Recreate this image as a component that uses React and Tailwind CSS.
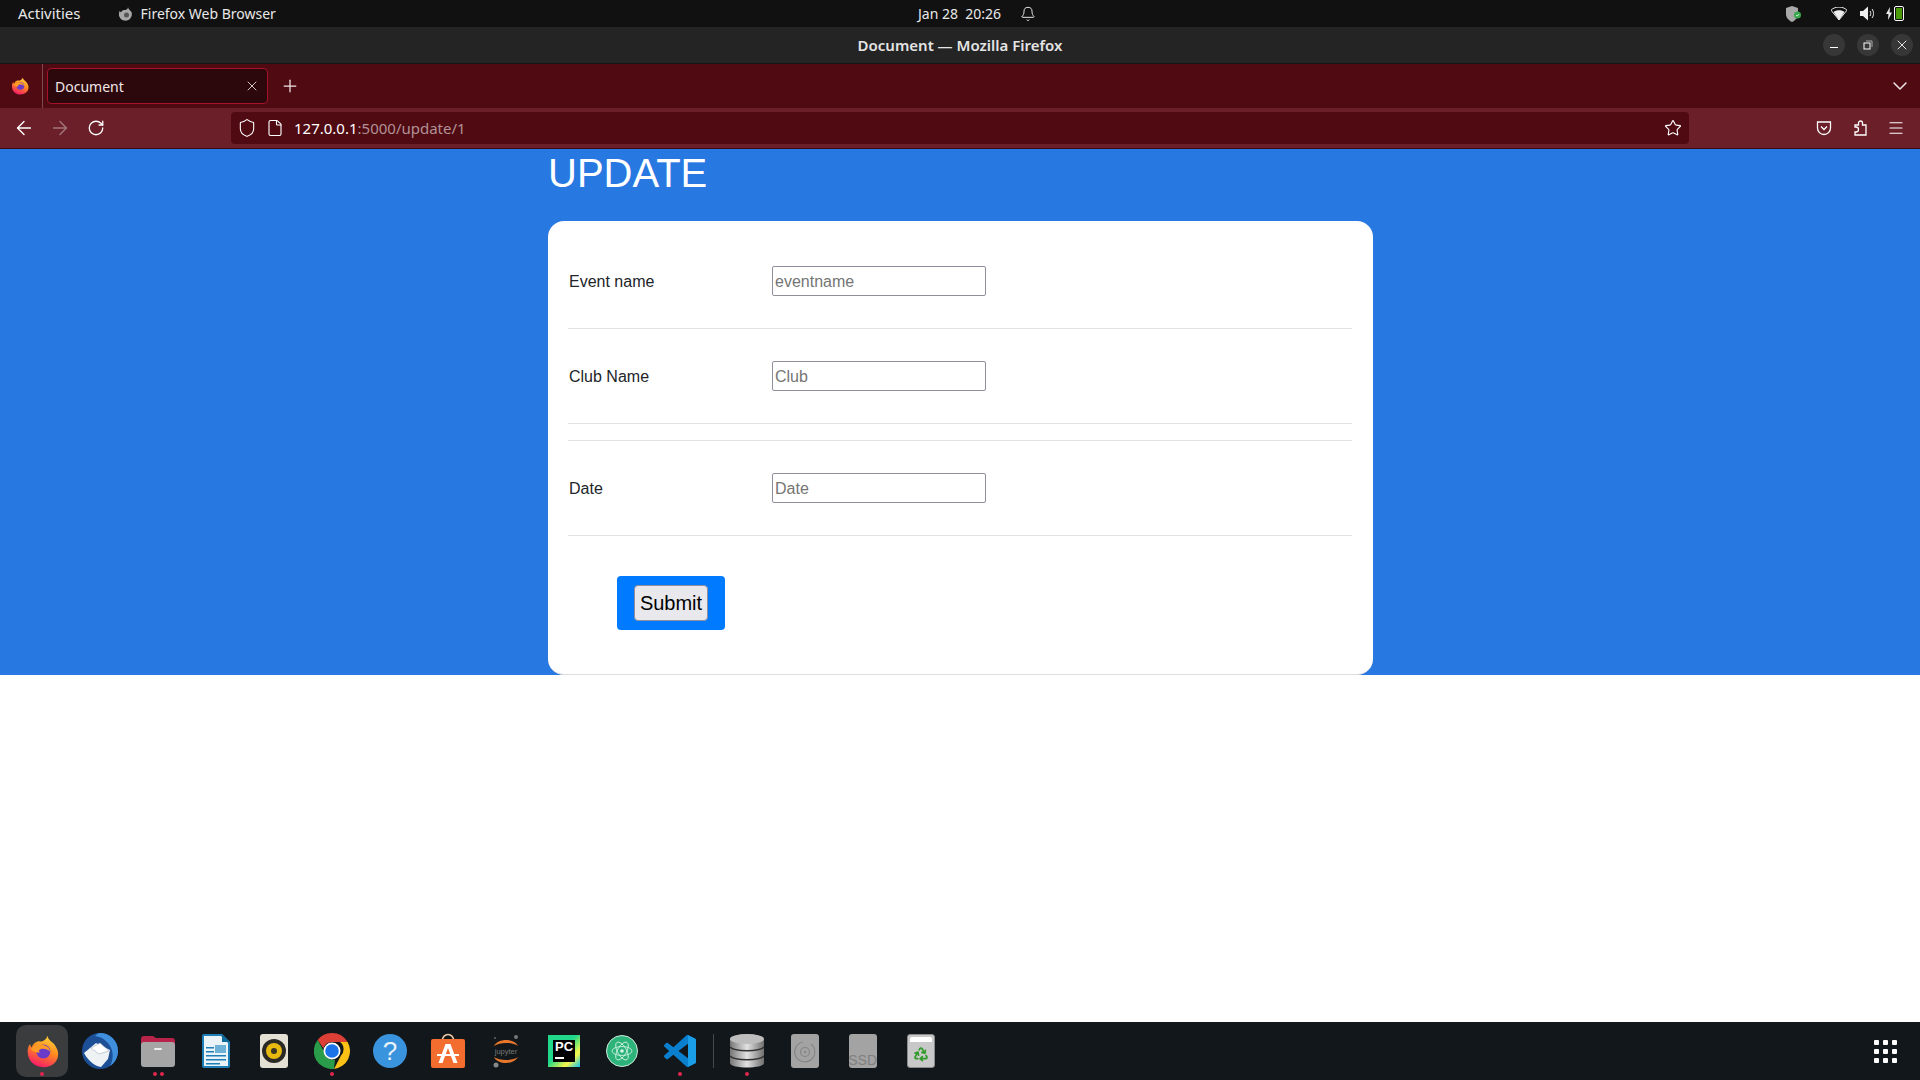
import { ArrowLeft, ArrowRight, RotateCw, Shield, File, Star, Plus, X, ChevronDown, Menu, Bell, Recycle } from "lucide-react";

const uiFont = "font-['Noto_Sans',sans-serif]";

function FirefoxLogo({ size = 20, id = "ff" }) {
  return (
    <svg width={size} height={size} viewBox="0 0 40 40">
      <defs>
        <linearGradient id={id} x1="0.7" y1="0" x2="0.3" y2="1">
          <stop offset="0" stopColor="#ffd43a" />
          <stop offset="0.45" stopColor="#ff8a1f" />
          <stop offset="1" stopColor="#f5156c" />
        </linearGradient>
      </defs>
      <path d="M26 1c1 5 5 7 8 10 3 4 5 8 5 12 0 10-8 16-18 16C10 39 2 31 2 20c0-3 1-7 3-9 0 2 1 3 2 4 1-3 3-6 7-7 2-1 3 0 5 0 3-1 6-3 7-7z" fill={`url(#${id})`} />
      <circle cx="21" cy="20" r="8.5" fill="#6a3bc8" />
      <path d="M6 17c4-5 10-6 15-5 5 1 8 4 8 8-3-3-7-4-11-3-3 1-3 3-1 4-5 1-9-1-11-4z" fill="#ff9a26" />
    </svg>
  );
}

function ThunderbirdIcon() {
  return (
    <svg width="36" height="36" viewBox="0 0 36 36">
      <circle cx="18" cy="18" r="18" fill="#1c4f96" />
      <path d="M18 0a18 18 0 0 1 18 18c0 6-3 12-8 15 4-7 4-17-3-24-3-3-6-5-12-6 2-2 3-3 5-3z" fill="#3f8fdc" />
      <path d="M2 20l12-10 14 7-2 9-7 8c-6-1-12-5-17-14z" fill="#eef2f5" />
      <path d="M9 15l9-5 9 8-10 3z" fill="#fff" stroke="#9fb0bf" strokeWidth="0.6" />
    </svg>
  );
}

function FolderIcon() {
  return (
    <svg width="34" height="32" viewBox="0 0 34 32">
      <path d="M0 4a3 3 0 0 1 3-3h9l3 2h16a3 3 0 0 1 3 3v6H0z" fill="#b8234a" />
      <rect x="0" y="7" width="34" height="25" rx="3" fill="#a5a5a5" />
      <rect x="13" y="13" width="8" height="2" rx="1" fill="#eee" />
    </svg>
  );
}

function WriterIcon() {
  return (
    <svg width="28" height="34" viewBox="0 0 28 34">
      <path d="M2 0h18l8 8v24a2 2 0 0 1-2 2H2a2 2 0 0 1-2-2V2a2 2 0 0 1 2-2z" fill="#1d7fb5" />
      <path d="M2 2h17l7 7v23H2z" fill="#e9f3f8" />
      <path d="M20 0l8 8h-8z" fill="#0f6a9c" />
      <path d="M4 13h8v1.5H4zM4 17h8v1.5H4zM4 21h20v1.5H4zM4 25h20v1.5H4zM4 29h14v1.5H4z" fill="#1d7fb5" />
      <rect x="13" y="11" width="11" height="8" fill="#6db1d6" />
    </svg>
  );
}

function RhythmboxIcon() {
  return (
    <svg width="28" height="34" viewBox="0 0 28 34">
      <rect width="28" height="34" rx="3" fill="#e5e0d4" />
      <circle cx="14" cy="17" r="12" fill="#2b2926" />
      <circle cx="14" cy="17" r="8" fill="#e8b90f" />
      <circle cx="14" cy="17" r="3" fill="#3a3520" />
    </svg>
  );
}

function ChromeIcon() {
  return (
    <svg width="36" height="36" viewBox="0 0 36 36">
      <path d="M18 0a18 18 0 0 1 15.6 9H18a9 9 0 0 0-8.6 6.3L3.6 7A18 18 0 0 1 18 0z" fill="#dc3f35" />
      <path d="M33.6 9A18 18 0 0 1 20 35.9l7-13.4A9 9 0 0 0 26 9z" fill="#fbc114" />
      <path d="M20 35.9A18 18 0 0 1 3.6 7l6.2 11A9 9 0 0 0 21 26.5z" fill="#2a9d4a" />
      <circle cx="18" cy="18" r="8.5" fill="#fff" />
      <circle cx="18" cy="18" r="6.8" fill="#1a73e8" />
    </svg>
  );
}

function HelpIcon() {
  return (
    <div className="flex h-[34px] w-[34px] items-center justify-center rounded-full bg-[#3a93dd] font-['Liberation_Sans',sans-serif] text-[26px] text-[#e8f2fb]">
      ?
    </div>
  );
}

function StoreIcon() {
  return (
    <svg width="34" height="36" viewBox="0 0 34 36">
      <path d="M11 9c0-10 12-10 12 0" fill="none" stroke="#e8c9a8" strokeWidth="1.5" />
      <rect y="6" width="34" height="29" rx="2" fill="#f26d2e" />
      <path d="M14.5 11h5l7 19h-4l-5.500-15-5.500 15h-4z" fill="#fff" />
      <rect x="6" y="21" width="22" height="2" fill="#fff" />
    </svg>
  );
}

function JupyterIcon() {
  return (
    <svg width="30" height="34" viewBox="0 0 30 34">
      <path d="M3 12c4-8 20-8 24 0-6-4-18-4-24 0z" fill="#e8762b" />
      <path d="M3 23c4 8 20 8 24 0-6 4-18 4-24 0z" fill="#e8762b" />
      <circle cx="25" cy="3" r="2" fill="#777" />
      <circle cx="5" cy="31" r="2.500" fill="#888" />
      <circle cx="4" cy="4" r="1" fill="#666" />
      <text x="15" y="20" textAnchor="middle" fontSize="7.5" fill="#777" fontFamily="Liberation Sans, sans-serif">jupyter</text>
    </svg>
  );
}

function PycharmIcon() {
  return (
    <div className="h-8 w-8 bg-[linear-gradient(135deg,#21d789_0%,#21d789_45%,#fcf84a_75%,#07c3f2_100%)] p-[5px]">
      <div className="flex h-full w-full flex-col bg-black px-[2px] font-['Liberation_Sans',sans-serif] text-[13px] font-bold leading-[14px] text-white">
        PC
        <div className="mt-[3px] h-[2px] w-[9px] bg-white" />
      </div>
    </div>
  );
}

function AtomIcon() {
  return (
    <svg width="32" height="32" viewBox="0 0 32 32">
      <circle cx="16" cy="16" r="15.500" fill="#2db37a" stroke="#cfe9dc" />
      <g fill="none" stroke="#d8f5e6" strokeWidth="0.8">
        <ellipse cx="16" cy="16" rx="10" ry="4.500" />
        <ellipse cx="16" cy="16" rx="10" ry="4.500" transform="rotate(60 16 16)" />
        <ellipse cx="16" cy="16" rx="10" ry="4.500" transform="rotate(120 16 16)" />
      </g>
      <circle cx="16" cy="16" r="1.800" fill="#d8f5e6" />
    </svg>
  );
}

function VscodeIcon() {
  return (
    <svg width="32" height="32" viewBox="0 0 100 100">
      <path d="M96.500 10.800 75.900.9c-2.400-1.200-5.200-.7-7.100 1.200L29.400 38 12.200 25c-1.600-1.200-3.800-1.100-5.300.3l-5.500 5c-1.800 1.600-1.800 4.500 0 6.100L16.300 50 1.400 63.600c-1.800 1.600-1.800 4.500 0 6.100l5.500 5c1.500 1.400 3.700 1.500 5.300.3l17.200-13 39.400 35.900c1.900 1.900 4.700 2.400 7.100 1.200l20.600-9.900c2.200-1 3.500-3.100 3.500-5.500V16.300c0-2.400-1.400-4.500-3.500-5.500zM75 72.700 45.100 50 75 27.300z" fill="#0a7fce" />
      <path d="M75 .5l1 .4 20.500 9.900c2.100 1 3.500 3.100 3.500 5.500v67.400c0 2.400-1.400 4.500-3.500 5.500L76 99.100l-1 .4z" fill="#1b9ee8" />
    </svg>
  );
}

function DatabaseIcon() {
  return (
    <svg width="34" height="34" viewBox="0 0 34 34">
      <defs>
        <linearGradient id="db" x1="0" y1="0" x2="1" y2="0">
          <stop offset="0" stopColor="#777" />
          <stop offset="0.5" stopColor="#e2e2e2" />
          <stop offset="1" stopColor="#6f6f6f" />
        </linearGradient>
      </defs>
      <path d="M0 5c0-6 34-6 34 0v24c0 6-34 6-34 0z" fill="url(#db)" />
      <ellipse cx="17" cy="5" rx="17" ry="5" fill="#bdbdbd" />
      <path d="M0 13c4 5 30 5 34 0M0 22c4 5 30 5 34 0" fill="none" stroke="#333" strokeWidth="1.500" />
    </svg>
  );
}

function DiskIcon() {
  return (
    <svg width="28" height="34" viewBox="0 0 28 34">
      <rect width="28" height="34" rx="3" fill="#a3a3a3" />
      <path d="M20 10a10 10 0 1 1-8-2" fill="none" stroke="#858585" strokeWidth="1.200" />
      <circle cx="14" cy="18" r="4.500" fill="none" stroke="#858585" strokeWidth="1.200" />
      <circle cx="14" cy="18" r="1.200" fill="#858585" />
    </svg>
  );
}

function TrashIcon() {
  return (
    <div className="flex h-[34px] w-7 flex-col items-center rounded-[3px] border border-[#8a8a8a] bg-[#c8c8c8]">
      <div className="mt-[2px] h-[5px] w-[22px] rounded-t-[2px] bg-white" />
      <Recycle size={16} strokeWidth={2.6} className="mt-[4px] text-[#2e9a27]" />
    </div>
  );
}

function DockItem({ children, dots = 0, active = false }) {
  return (
    <div className="relative flex h-[58px] w-[58px] items-center justify-center">
      {active && <div className="absolute inset-x-[3px] inset-y-[3px] rounded-[10px] bg-[#3a3c3e]" />}
      <div className="relative flex">{children}</div>
      {dots > 0 && (
        <div className="absolute bottom-[4px] flex gap-[3px]">
          {[...Array(dots).keys()].map((n) => (
            <span key={n} className="h-1 w-1 rounded-full bg-[#e0264e]" />
          ))}
        </div>
      )}
    </div>
  );
}

function FormRow({ label, placeholder }) {
  return (
    <div className="flex h-[30px] items-center">
      <label className="w-[204px] pt-px pl-px text-base text-[#212529]">{label}</label>
      <input
        placeholder={placeholder}
        className="h-[30px] w-[214px] rounded-[2px] border border-[#8f8f9d] bg-white px-[2px] pt-px text-base text-[#212529] placeholder:text-[#757575]"
      />
    </div>
  );
}

export default function App() {
  return (
    <div className="flex h-screen w-full flex-col overflow-hidden bg-white">
      {/* system top bar */}
      <div className={`flex h-[27px] shrink-0 items-center bg-[#111111] text-[14px] text-[#e8e8e8] ${uiFont}`}>
        <div className="flex w-[918px] items-center">
          <span className="ml-[18px] text-[15px]">Activities</span>
          <svg width="14" height="14" viewBox="0 0 14 14" className="ml-[38px]">
            <path d="M9 0c0 2 2 3 3.500 5A6.500 6.500 0 1 1 1 3.500c0 1 .5 1.500 1 2C3 3 5 3 6.500 3 8 2.500 9 1.500 9 0z" fill="#a8a8a8" />
            <circle cx="7.500" cy="8" r="2.500" fill="#555" />
          </svg>
          <span className="ml-[8px]">Firefox Web Browser</span>
        </div>
        <span className="w-[102px] whitespace-pre">Jan 28  20:26</span>
        <Bell size={16} strokeWidth={1.5} />
        <div className="ml-auto flex items-center pr-[16px]">
          <div className="relative">
            <svg width="17" height="16" viewBox="0 0 17 16">
              <path d="M7 0l6 2v6c0 4-3 6.500-6 8-3-1.500-6-4-6-8V2z" fill="#a9a9a9" />
              <circle cx="12.500" cy="9" r="3.500" fill="#35a84a" />
              <path d="M11 9l1.200 1.200L14 8" fill="none" stroke="#fff" strokeWidth="0.8" />
            </svg>
          </div>
          <svg width="16" height="13" viewBox="0 0 16 13" className="ml-[29px]">
            <path d="M0 3.200c4-4.200 12-4.200 16 0L8 13z" fill="none" stroke="#eee" strokeWidth="1" />
            <path d="M2.500 5c3-2.400 8-2.400 11 0L8 13z" fill="#eee" />
          </svg>
          <svg width="14" height="15" viewBox="0 0 14 15" className="ml-[13px]">
            <path d="M0 5h3l5-4.500v14L3 10H0z" fill="#eee" />
            <path d="M10 5c1 1.500 1 3.500 0 5M12 3c2 2.500 2 6.500 0 9" fill="none" stroke="#eee" strokeWidth="1" />
          </svg>
          <svg width="6" height="13" viewBox="0 0 6 13" className="ml-[12px]">
            <path d="M4 0L0 7h2.500L2 13l4-7.500H3.500z" fill="#eee" />
          </svg>
          <div className="relative ml-[2px] flex h-[15px] w-[10px] items-center justify-center rounded-[2px] border border-white">
            <div className="h-[11px] w-[6px] bg-[#4a9a0a]" />
          </div>
        </div>
      </div>

      {/* window title */}
      <div className={`grid h-[37px] shrink-0 grid-cols-[1fr_auto_1fr] items-center border-b border-[#141414] bg-[#242424] text-[15px] font-semibold text-[#e4e4e4] ${uiFont}`}>
        <div />
        <span>Document — Mozilla Firefox</span>
        <div className="flex justify-end gap-3 pr-[7px]">
          <div className="flex h-[22px] w-[22px] items-center justify-center rounded-full bg-[#373737]">
            <div className="mt-[5px] h-px w-2 bg-white" />
          </div>
          <div className="flex h-[22px] w-[22px] items-center justify-center rounded-full bg-[#373737]">
            <svg width="10" height="10" viewBox="0 0 10 10" fill="none" stroke="#fff">
              <rect x="1" y="3" width="6" height="6" />
              <path d="M3 1h6v6" stroke="#aaa" />
            </svg>
          </div>
          <div className="flex h-[22px] w-[22px] items-center justify-center rounded-full bg-[#373737]">
            <X size={16} strokeWidth={1.5} />
          </div>
        </div>
      </div>

      {/* tab strip */}
      <div className={`flex h-[44px] shrink-0 items-center bg-[#500a12] text-[14px] text-[#f0e6e6] ${uiFont}`}>
        <div className="flex h-full w-[43px] items-center justify-center border-r border-[#7d4a50] pr-[3px]">
          <FirefoxLogo size={18} id="ff-tab" />
        </div>
        <div className="ml-[4px] flex h-9 w-[221px] items-center justify-between rounded-[4px] border border-[#a5122a] bg-[#2c080d] pl-[7px] pr-[7px]">
          <span>Document</span>
          <X size={16} strokeWidth={1.3} />
        </div>
        <Plus size={20} strokeWidth={1.5} className="ml-[12px]" />
        <ChevronDown size={24} strokeWidth={1.5} className="ml-auto mr-[8px]" />
      </div>

      {/* toolbar */}
      <div className={`flex h-[41px] shrink-0 items-center border-b border-[#3c0a10] bg-[#6b1f29] text-[15px] text-white ${uiFont}`}>
        <ArrowLeft size={22} strokeWidth={1.5} className="ml-[13px]" />
        <ArrowRight size={22} strokeWidth={1.5} className="ml-[14px] text-[#a5757b]" />
        <RotateCw size={18} strokeWidth={1.7} className="ml-[16px]" />
        <div className="ml-[126px] flex h-8 w-[1458px] items-center rounded-[4px] bg-[#500a12] pl-[6px] pr-[7px]">
          <Shield size={20} strokeWidth={1.3} />
          <File size={18} strokeWidth={1.5} className="ml-[9px]" />
          <span className="ml-[10px]">127.0.0.1<span className="text-[#b09296]">:5000/update/1</span></span>
          <Star size={18} strokeWidth={1.5} className="ml-auto" />
        </div>
        <div className="ml-auto flex items-center pr-[15px]">
          <svg width="16" height="16" viewBox="0 0 16 16" fill="none" stroke="#fff" strokeWidth="1.300">
            <path d="M1.500 2h13v6a6.500 6.500 0 0 1-13 0z" />
            <path d="M5 6.500l3 3 3-3" />
          </svg>
          <svg width="16" height="16" viewBox="0 0 16 16" fill="none" stroke="#fff" strokeWidth="1.300" className="ml-[20px]">
            <path d="M6.500 3a2 2 0 0 1 4 0v2H14v10H3v-3h1a2.500 2.500 0 0 0 0-5H3V5h3.500z" />
          </svg>
          <Menu size={18} strokeWidth={1.5} className="ml-[19px]" />
        </div>
      </div>

      {/* page */}
      <div className="flex-1 font-['Liberation_Sans',sans-serif]">
        <div className="bg-[#2878e2]">
          <div className="mx-auto w-[824px]">
            <h1 className="h-[72px] text-[40px] leading-[48px] text-white">UPDATE</h1>
            <form className="w-[825px] rounded-2xl border-b border-[#dddddd] bg-white pl-5 pr-[21px] pt-[45px] pb-[44px]">
              <FormRow label="Event name" placeholder="eventname" />
              <hr className="mt-8 mb-[32px] border-[#e2e2e2]" />
              <FormRow label="Club Name" placeholder="Club" />
              <hr className="mt-8 mb-4 border-[#e2e2e2]" />
              <hr className="mb-[32px] border-[#e2e2e2]" />
              <FormRow label="Date" placeholder="Date" />
              <hr className="mt-8 mb-10 border-[#e2e2e2]" />
              <div className="ml-[49px] flex h-[54px] w-[108px] items-center justify-center rounded-[4px] bg-[#007bff]">
                <button type="button" className="h-9 w-[74px] rounded-[4px] border border-[#8f8f9d] bg-[#e9e9ed] text-[20px] text-black">
                  Submit
                </button>
              </div>
            </form>
          </div>
        </div>
      </div>

      {/* dock */}
      <div className="flex h-[58px] shrink-0 items-center bg-[#11171a] pl-[13px]">
        <DockItem active dots={1}><FirefoxLogo size={33} id="ff-dock" /></DockItem>
        <DockItem><ThunderbirdIcon /></DockItem>
        <DockItem dots={2}><FolderIcon /></DockItem>
        <DockItem><WriterIcon /></DockItem>
        <DockItem><RhythmboxIcon /></DockItem>
        <DockItem dots={1}><ChromeIcon /></DockItem>
        <DockItem><HelpIcon /></DockItem>
        <DockItem><StoreIcon /></DockItem>
        <DockItem><JupyterIcon /></DockItem>
        <DockItem><PycharmIcon /></DockItem>
        <DockItem><AtomIcon /></DockItem>
        <DockItem dots={1}><VscodeIcon /></DockItem>
        <div className="ml-[4px] mr-[4px] h-[34px] w-px bg-[#44494b]" />
        <DockItem dots={1}><DatabaseIcon /></DockItem>
        <DockItem><DiskIcon /></DockItem>
        <DockItem>
          <div className="flex h-[34px] w-7 items-end justify-end overflow-hidden rounded-[3px] bg-[#a3a3a3] font-['Liberation_Sans',sans-serif] text-[14px] leading-[16px] text-[#808080]">SSD</div>
        </DockItem>
        <DockItem><TrashIcon /></DockItem>
        <div className="ml-auto mr-[23px] grid grid-cols-3 gap-x-[4px] gap-y-[4px]">
          {[...Array(9).keys()].map((n) => (
            <span key={n} className="h-[5px] w-[5px] rounded-[1px] bg-white" />
          ))}
        </div>
      </div>
    </div>
  );
}
